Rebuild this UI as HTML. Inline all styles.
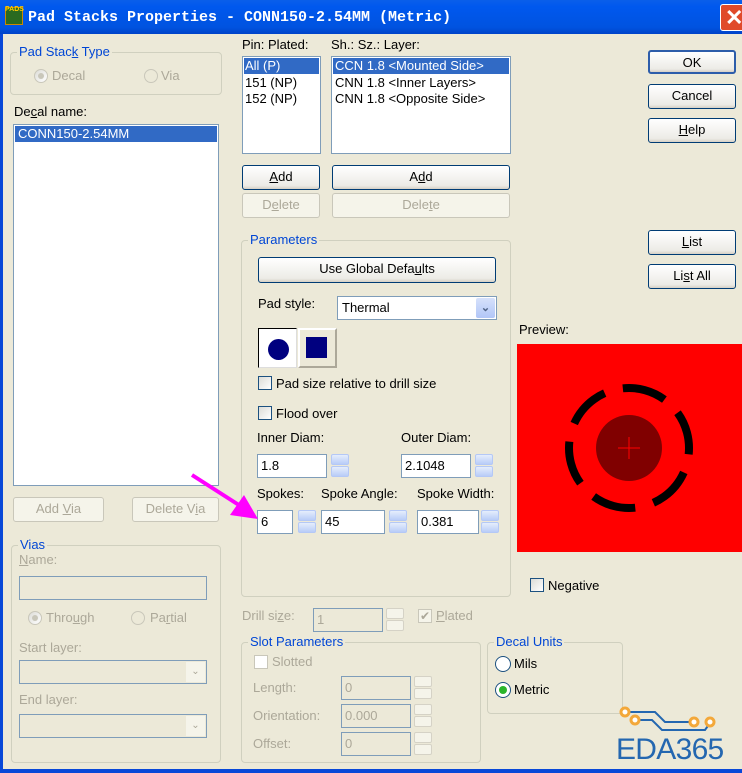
<!DOCTYPE html>
<html><head><meta charset="utf-8"><style>
*{box-sizing:border-box;margin:0;padding:0}
body{width:742px;height:773px;overflow:hidden;background:#ECE9D8;font-family:"Liberation Sans",sans-serif;font-size:13px;color:#000;position:relative}
.a{position:absolute;white-space:nowrap}
.dis{color:#ACA899}
.grp{position:absolute;border:1px solid #D0D0BF;border-radius:4px}
.gl{position:absolute;color:#0046D5;background:#ECE9D8;padding:0 2px;top:-9px;left:6px;font-size:13px}
.btn{position:absolute;border:1px solid #003C74;border-radius:3px;background:linear-gradient(#fff,#ECEBE6 85%,#D6D0C5);text-align:center;line-height:22px}
.btn.d{border-color:#C9C7BA;background:#F5F4EA;color:#ACA899}
.in{position:absolute;background:#fff;border:1px solid #7F9DB9;padding-left:3px;line-height:21px}
.in.d{background:#ECE9D8;color:#ACA899}
.sp{position:absolute;width:18px}
.sp div{height:11px;margin-bottom:1px;border:1px solid #B4C8F6;border-radius:2px;background:linear-gradient(#E6EEFC,#B9CCF8)}
.sp.d div{background:#F5F4EA;border-color:#D5D2C6}
.cb{position:absolute;width:14px;height:14px;border:1px solid #1C5180;background:linear-gradient(135deg,#DCDCD7,#fff)}
.rd{position:absolute;width:14px;height:14px;border-radius:50%;border:1px solid #1C5180;background:linear-gradient(135deg,#DCDCD7,#fff)}
.lb{position:absolute;background:#fff;border:1px solid #7F9DB9}
.sel{background:#316AC5;color:#fff}
u{text-decoration:underline}
</style></head><body>
<div class="a" style="left:0;top:0;width:742px;height:34px;background:linear-gradient(#0A5FEA,#0058EE 20%,#0053E0 80%,#0043C8)"></div>
<div class="a" style="left:5px;top:7px;width:18px;height:18px;background:#2a6a20;border:1px solid #c80"></div>
<div class="a" style="left:5px;top:6px;font-size:7px;color:#fc0;font-weight:bold">PADS</div>
<div class="a" style="left:28px;top:9px;font-family:'Liberation Mono',monospace;font-weight:bold;font-size:15px;color:#fff">Pad Stacks Properties - CONN150-2.54MM (Metric)</div>
<div class="a" style="left:720px;top:4px;width:26px;height:27px;background:#E04A2A;border:1px solid #fff;border-radius:3px;color:#fff;font-size:22px;font-weight:bold;line-height:25px;padding-left:4px">✕</div>
<div class="a" style="left:0;top:34px;width:3px;height:739px;background:#0848D8"></div>
<div class="a" style="left:0;top:769px;width:742px;height:4px;background:#0848D8"></div>

<div class="grp" style="left:10px;top:52px;width:212px;height:43px"><div class="gl">Pad Stac<u>k</u> Type</div></div>
<div class="rd" style="left:34px;top:69px;border-color:#C9C7BA"></div><div class="a" style="left:38px;top:73px;width:6px;height:6px;border-radius:50%;background:#C9C7BA"></div>
<div class="a dis" style="left:52px;top:68px">Decal</div>
<div class="rd" style="left:144px;top:69px;border-color:#C9C7BA;background:none"></div>
<div class="a dis" style="left:161px;top:68px">Via</div>
<div class="a" style="left:14px;top:104px">De<u>c</u>al name:</div>
<div class="lb" style="left:13px;top:124px;width:206px;height:362px"></div>
<div class="a sel" style="left:15px;top:126px;width:202px;height:16px;padding-left:3px;line-height:16px">CONN150-2.54MM</div>
<div class="btn d" style="left:13px;top:497px;width:91px;height:25px">Add <u>V</u>ia</div>
<div class="btn d" style="left:132px;top:497px;width:87px;height:25px">Delete V<u>i</u>a</div>

<div class="grp" style="left:11px;top:545px;width:210px;height:218px"><div class="gl">Vias</div></div>
<div class="a dis" style="left:19px;top:552px"><u>N</u>ame:</div>
<div class="in d" style="left:19px;top:576px;width:188px;height:24px"></div>
<div class="rd" style="left:28px;top:611px;border-color:#C9C7BA"></div><div class="a" style="left:32px;top:615px;width:6px;height:6px;border-radius:50%;background:#C9C7BA"></div>
<div class="a dis" style="left:46px;top:610px">Thro<u>u</u>gh</div>
<div class="rd" style="left:131px;top:611px;border-color:#C9C7BA;background:none"></div>
<div class="a dis" style="left:150px;top:610px">Pa<u>r</u>tial</div>
<div class="a dis" style="left:19px;top:640px">Start layer:</div>
<div class="in d" style="left:19px;top:660px;width:188px;height:24px"></div>
<div class="a dis" style="left:186px;top:662px;width:19px;height:20px;background:#F5F4EA;text-align:center;font-size:10px;line-height:20px">⌄</div>
<div class="a dis" style="left:19px;top:692px">End layer:</div>
<div class="in d" style="left:19px;top:714px;width:188px;height:24px"></div>
<div class="a dis" style="left:186px;top:716px;width:19px;height:20px;background:#F5F4EA;text-align:center;font-size:10px;line-height:20px">⌄</div>

<div class="a" style="left:242px;top:37px">Pin: Plated:</div>
<div class="a" style="left:331px;top:37px">Sh.: Sz.: Layer:</div>
<div class="lb" style="left:242px;top:56px;width:79px;height:98px"></div>
<div class="a sel" style="left:244px;top:58px;width:75px;height:16px;padding-left:1px;line-height:16px">All (P)</div>
<div class="a" style="left:245px;top:75px;line-height:16px">151 (NP)<br>152 (NP)</div>
<div class="lb" style="left:331px;top:56px;width:180px;height:98px"></div>
<div class="a sel" style="left:333px;top:58px;width:176px;height:16px;padding-left:2px;line-height:16px">CCN 1.8 &lt;Mounted Side&gt;</div>
<div class="a" style="left:335px;top:75px;line-height:16px">CNN 1.8 &lt;Inner Layers&gt;<br>CNN 1.8 &lt;Opposite Side&gt;</div>
<div class="btn" style="left:242px;top:165px;width:78px;height:25px"><u>A</u>dd</div>
<div class="btn d" style="left:242px;top:193px;width:78px;height:25px">D<u>e</u>lete</div>
<div class="btn" style="left:332px;top:165px;width:178px;height:25px">A<u>d</u>d</div>
<div class="btn d" style="left:332px;top:193px;width:178px;height:25px">Dele<u>t</u>e</div>

<div class="btn" style="left:648px;top:50px;width:88px;height:24px;border:2px solid #2D5DAA">OK</div>
<div class="btn" style="left:648px;top:84px;width:88px;height:25px">Cancel</div>
<div class="btn" style="left:648px;top:118px;width:88px;height:25px"><u>H</u>elp</div>
<div class="btn" style="left:648px;top:230px;width:88px;height:25px"><u>L</u>ist</div>
<div class="btn" style="left:648px;top:264px;width:88px;height:25px">Li<u>s</u>t All</div>

<div class="grp" style="left:241px;top:240px;width:270px;height:357px"><div class="gl" style="left:6px">Parameters</div></div>
<div class="btn" style="left:258px;top:257px;width:238px;height:26px">Use Global Defa<u>u</u>lts</div>
<div class="a" style="left:258px;top:296px">Pad style:</div>
<div class="in" style="left:337px;top:296px;width:160px;height:24px;padding-left:4px;line-height:22px">Thermal</div>
<div class="a" style="left:476px;top:298px;width:19px;height:20px;background:linear-gradient(#D6E1FB,#B1C6F7);border-radius:2px;color:#4D6185;text-align:center;font-size:11px;line-height:20px;font-weight:bold">⌄</div>
<div class="a" style="left:258px;top:328px;width:39px;height:40px;background:#fff;border:1px solid;border-color:#000 #ddd #ddd #000"></div>
<div class="a" style="left:268px;top:339px;width:21px;height:21px;border-radius:50%;background:#00007F"></div>
<div class="a" style="left:298px;top:328px;width:39px;height:40px;border:2px solid;border-color:#fff #ACA899 #ACA899 #fff;background:#ECE9D8"></div>
<div class="a" style="left:306px;top:337px;width:21px;height:21px;background:#00007F"></div>
<div class="cb" style="left:258px;top:376px"></div><div class="a" style="left:276px;top:376px">Pad size relative to drill size</div>
<div class="cb" style="left:258px;top:406px"></div><div class="a" style="left:276px;top:406px">Flood over</div>
<div class="a" style="left:257px;top:430px">Inner Diam:</div>
<div class="a" style="left:401px;top:430px">Outer Diam:</div>
<div class="in" style="left:257px;top:454px;width:70px;height:24px">1.8</div>
<div class="sp" style="left:331px;top:454px"><div></div><div></div></div>
<div class="in" style="left:401px;top:454px;width:70px;height:24px">2.1048</div>
<div class="sp" style="left:475px;top:454px"><div></div><div></div></div>
<div class="a" style="left:257px;top:486px">Spokes:</div>
<div class="a" style="left:321px;top:486px">Spoke Angle:</div>
<div class="a" style="left:417px;top:486px">Spoke Width:</div>
<div class="in" style="left:257px;top:510px;width:36px;height:24px">6</div>
<div class="sp" style="left:298px;top:510px"><div></div><div></div></div>
<div class="in" style="left:321px;top:510px;width:64px;height:24px">45</div>
<div class="sp" style="left:389px;top:510px"><div></div><div></div></div>
<div class="in" style="left:417px;top:510px;width:62px;height:24px">0.381</div>
<div class="sp" style="left:481px;top:510px"><div></div><div></div></div>
<svg class="a" style="left:180px;top:465px" width="90" height="65"><line x1="12" y1="10" x2="62" y2="42" stroke="#FF00FF" stroke-width="4"/><polygon points="78,54 50,50 64,30" fill="#FF00FF"/></svg>

<div class="a dis" style="left:242px;top:608px">Drill si<u>z</u>e:</div>
<div class="in d" style="left:313px;top:608px;width:70px;height:24px">1</div>
<div class="sp d" style="left:386px;top:608px"><div></div><div></div></div>
<div class="cb" style="left:418px;top:609px;border-color:#C9C7BA;background:#F5F4EA;color:#ACA899;font-size:12px;line-height:12px;text-align:center">✔</div>
<div class="a dis" style="left:436px;top:608px"><u>P</u>lated</div>
<div class="grp" style="left:241px;top:642px;width:240px;height:121px"><div class="gl">Slot Parameters</div></div>
<div class="cb" style="left:254px;top:655px;border-color:#C9C7BA;background:#fff"></div><div class="a dis" style="left:272px;top:654px">Slotted</div>
<div class="a dis" style="left:253px;top:680px">Length:</div>
<div class="in d" style="left:341px;top:676px;width:70px;height:24px">0</div>
<div class="sp d" style="left:414px;top:676px"><div></div><div></div></div>
<div class="a dis" style="left:253px;top:708px">Orientation:</div>
<div class="in d" style="left:341px;top:704px;width:70px;height:24px">0.000</div>
<div class="sp d" style="left:414px;top:704px"><div></div><div></div></div>
<div class="a dis" style="left:253px;top:736px">Offset:</div>
<div class="in d" style="left:341px;top:732px;width:70px;height:24px">0</div>
<div class="sp d" style="left:414px;top:732px"><div></div><div></div></div>

<div class="grp" style="left:487px;top:642px;width:136px;height:72px"><div class="gl">Decal Units</div></div>
<div class="rd" style="left:495px;top:656px;width:16px;height:16px;background:#fff"></div><div class="a" style="left:514px;top:656px">Mils</div>
<div class="rd" style="left:495px;top:682px;width:16px;height:16px;background:#fff"></div><div class="a" style="left:499px;top:686px;width:8px;height:8px;border-radius:50%;background:#2BB52B"></div><div class="a" style="left:514px;top:682px">Metric</div>

<div class="a" style="left:519px;top:322px">Preview:</div>
<svg class="a" style="left:517px;top:344px" width="225" height="208">
<rect width="225" height="208" fill="#FF0000"/>
<circle cx="112" cy="104" r="33" fill="#800000"/>
<line x1="101" y1="104" x2="123" y2="104" stroke="#f00"/><line x1="112" y1="93" x2="112" y2="115" stroke="#f00"/>
<circle cx="112" cy="104" r="60" fill="none" stroke="#000" stroke-width="8" stroke-dasharray="44 18.83" transform="rotate(-36 112 104)"/>
</svg>
<div class="cb" style="left:530px;top:578px"></div><div class="a" style="left:548px;top:578px">Negative</div>

<svg class="a" style="left:615px;top:703px" width="110" height="35">
<path d="M10 9 H40 L50 19 H78 M20 17 H37 L47 27 H90 L95 20" fill="none" stroke="#2467B0" stroke-width="2"/>
<g fill="#fff" stroke="#F3A83A" stroke-width="3"><circle cx="10" cy="9" r="4"/><circle cx="20" cy="17" r="4"/><circle cx="79" cy="19" r="4"/><circle cx="95" cy="19" r="4"/></g>
</svg>
<div class="a" style="left:616px;top:733px;font-size:30px;color:#2467B0;letter-spacing:-0.7px">EDA365</div>
</body></html>
